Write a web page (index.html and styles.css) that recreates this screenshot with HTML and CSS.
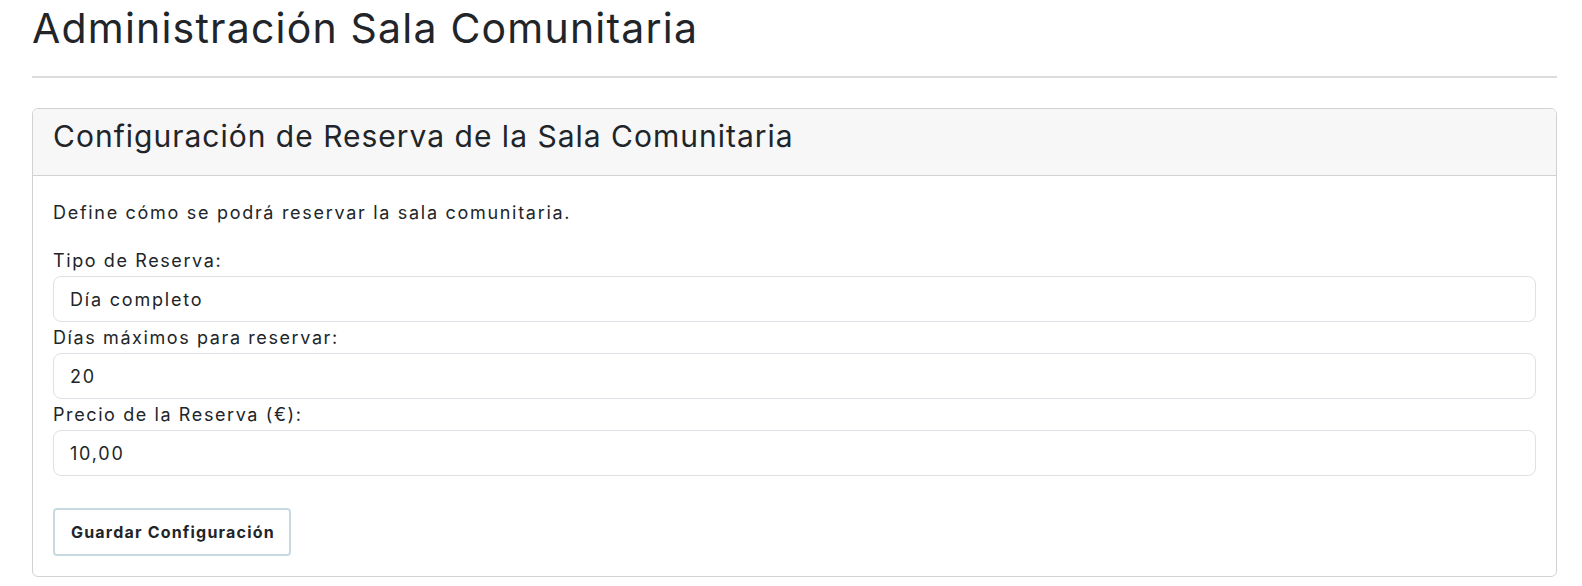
FILE: index.html
```html
<!DOCTYPE html>
<html lang="es">
<head>
<meta charset="utf-8">
<title>Administración Sala Comunitaria</title>
<link rel="stylesheet" href="styles.css">
</head>
<body>
<div class="page">
  <h1 class="title">Administración Sala Comunitaria</h1>
  <hr class="divider">
  <section class="card">
    <header class="card-header">
      <h2 class="card-title">Configuración de Reserva de la Sala Comunitaria</h2>
    </header>
    <div class="card-body">
      <p class="intro">Define cómo se podrá reservar la sala comunitaria.</p>
      <form class="form">
        <label class="label" for="tipo">Tipo de Reserva:</label>
        <div class="field" id="tipo">Día completo</div>
        <label class="label" for="dias">Días máximos para reservar:</label>
        <div class="field" id="dias">20</div>
        <label class="label" for="precio">Precio de la Reserva (€):</label>
        <div class="field" id="precio">10,00</div>
        <div class="actions">
          <button type="button" class="btn">Guardar Configuración</button>
        </div>
      </form>
    </div>
  </section>
</div>
</body>
</html>
```

FILE: styles.css
```css
* { box-sizing: border-box; }
html, body { margin: 0; padding: 0; background: #ffffff; }
body {
  font-family: Inter, "Open Sans", "Noto Sans", sans-serif;
  color: #212529;
}
.page {
  padding: 0 25px 0 32px;
}
.title {
  margin: 0;
  padding-top: 4px;
  font-size: 41px;
  letter-spacing: 1.2px;
  line-height: 48px;
  font-weight: 400;
  color: #212529;
}
.divider {
  margin: 24px 0 30px;
  border: 0;
  border-top: 2px solid #dcdcdc;
  height: 0;
}
.card {
  border: 1px solid #d2d2d2;
  border-radius: 6px;
  overflow: hidden;
}
.card-header {
  background: #f7f7f7;
  border-bottom: 1px solid #d2d2d2;
  padding: 9px 20px 21px;
}
.card-title {
  margin: 0;
  font-size: 30px;
  letter-spacing: 1px;
  line-height: 36px;
  font-weight: 400;
  color: #212529;
}
.card-body {
  padding: 24px 20px 20px;
}
.intro {
  margin: 0 0 19px;
  font-size: 18px;
  letter-spacing: 1.7px;
  line-height: 26px;
}
.form {
  display: flex;
  flex-direction: column;
  align-items: stretch;
}
.label {
  display: block;
  margin: 4px 0 3px;
  font-size: 18px;
  letter-spacing: 1.6px;
  line-height: 24px;
}
.field {
  height: 46px;
  display: flex;
  align-items: center;
  padding: 0 16px;
  border: 1px solid #e0e1e6;
  border-radius: 8px;
  font-size: 18px;
  letter-spacing: 1.8px;
  color: #212529;
  background: #fff;
}
.actions {
  margin-top: 32px;
  display: flex;
}
.btn {
  height: 48px;
  padding: 0 14px 0 16px;
  border: 2px solid #c9d9e1;
  border-radius: 4px;
  background: #fff;
  font-family: inherit;
  font-size: 16px;
  letter-spacing: 1.2px;
  font-weight: 700;
  color: #212529;
  cursor: pointer;
}
```
